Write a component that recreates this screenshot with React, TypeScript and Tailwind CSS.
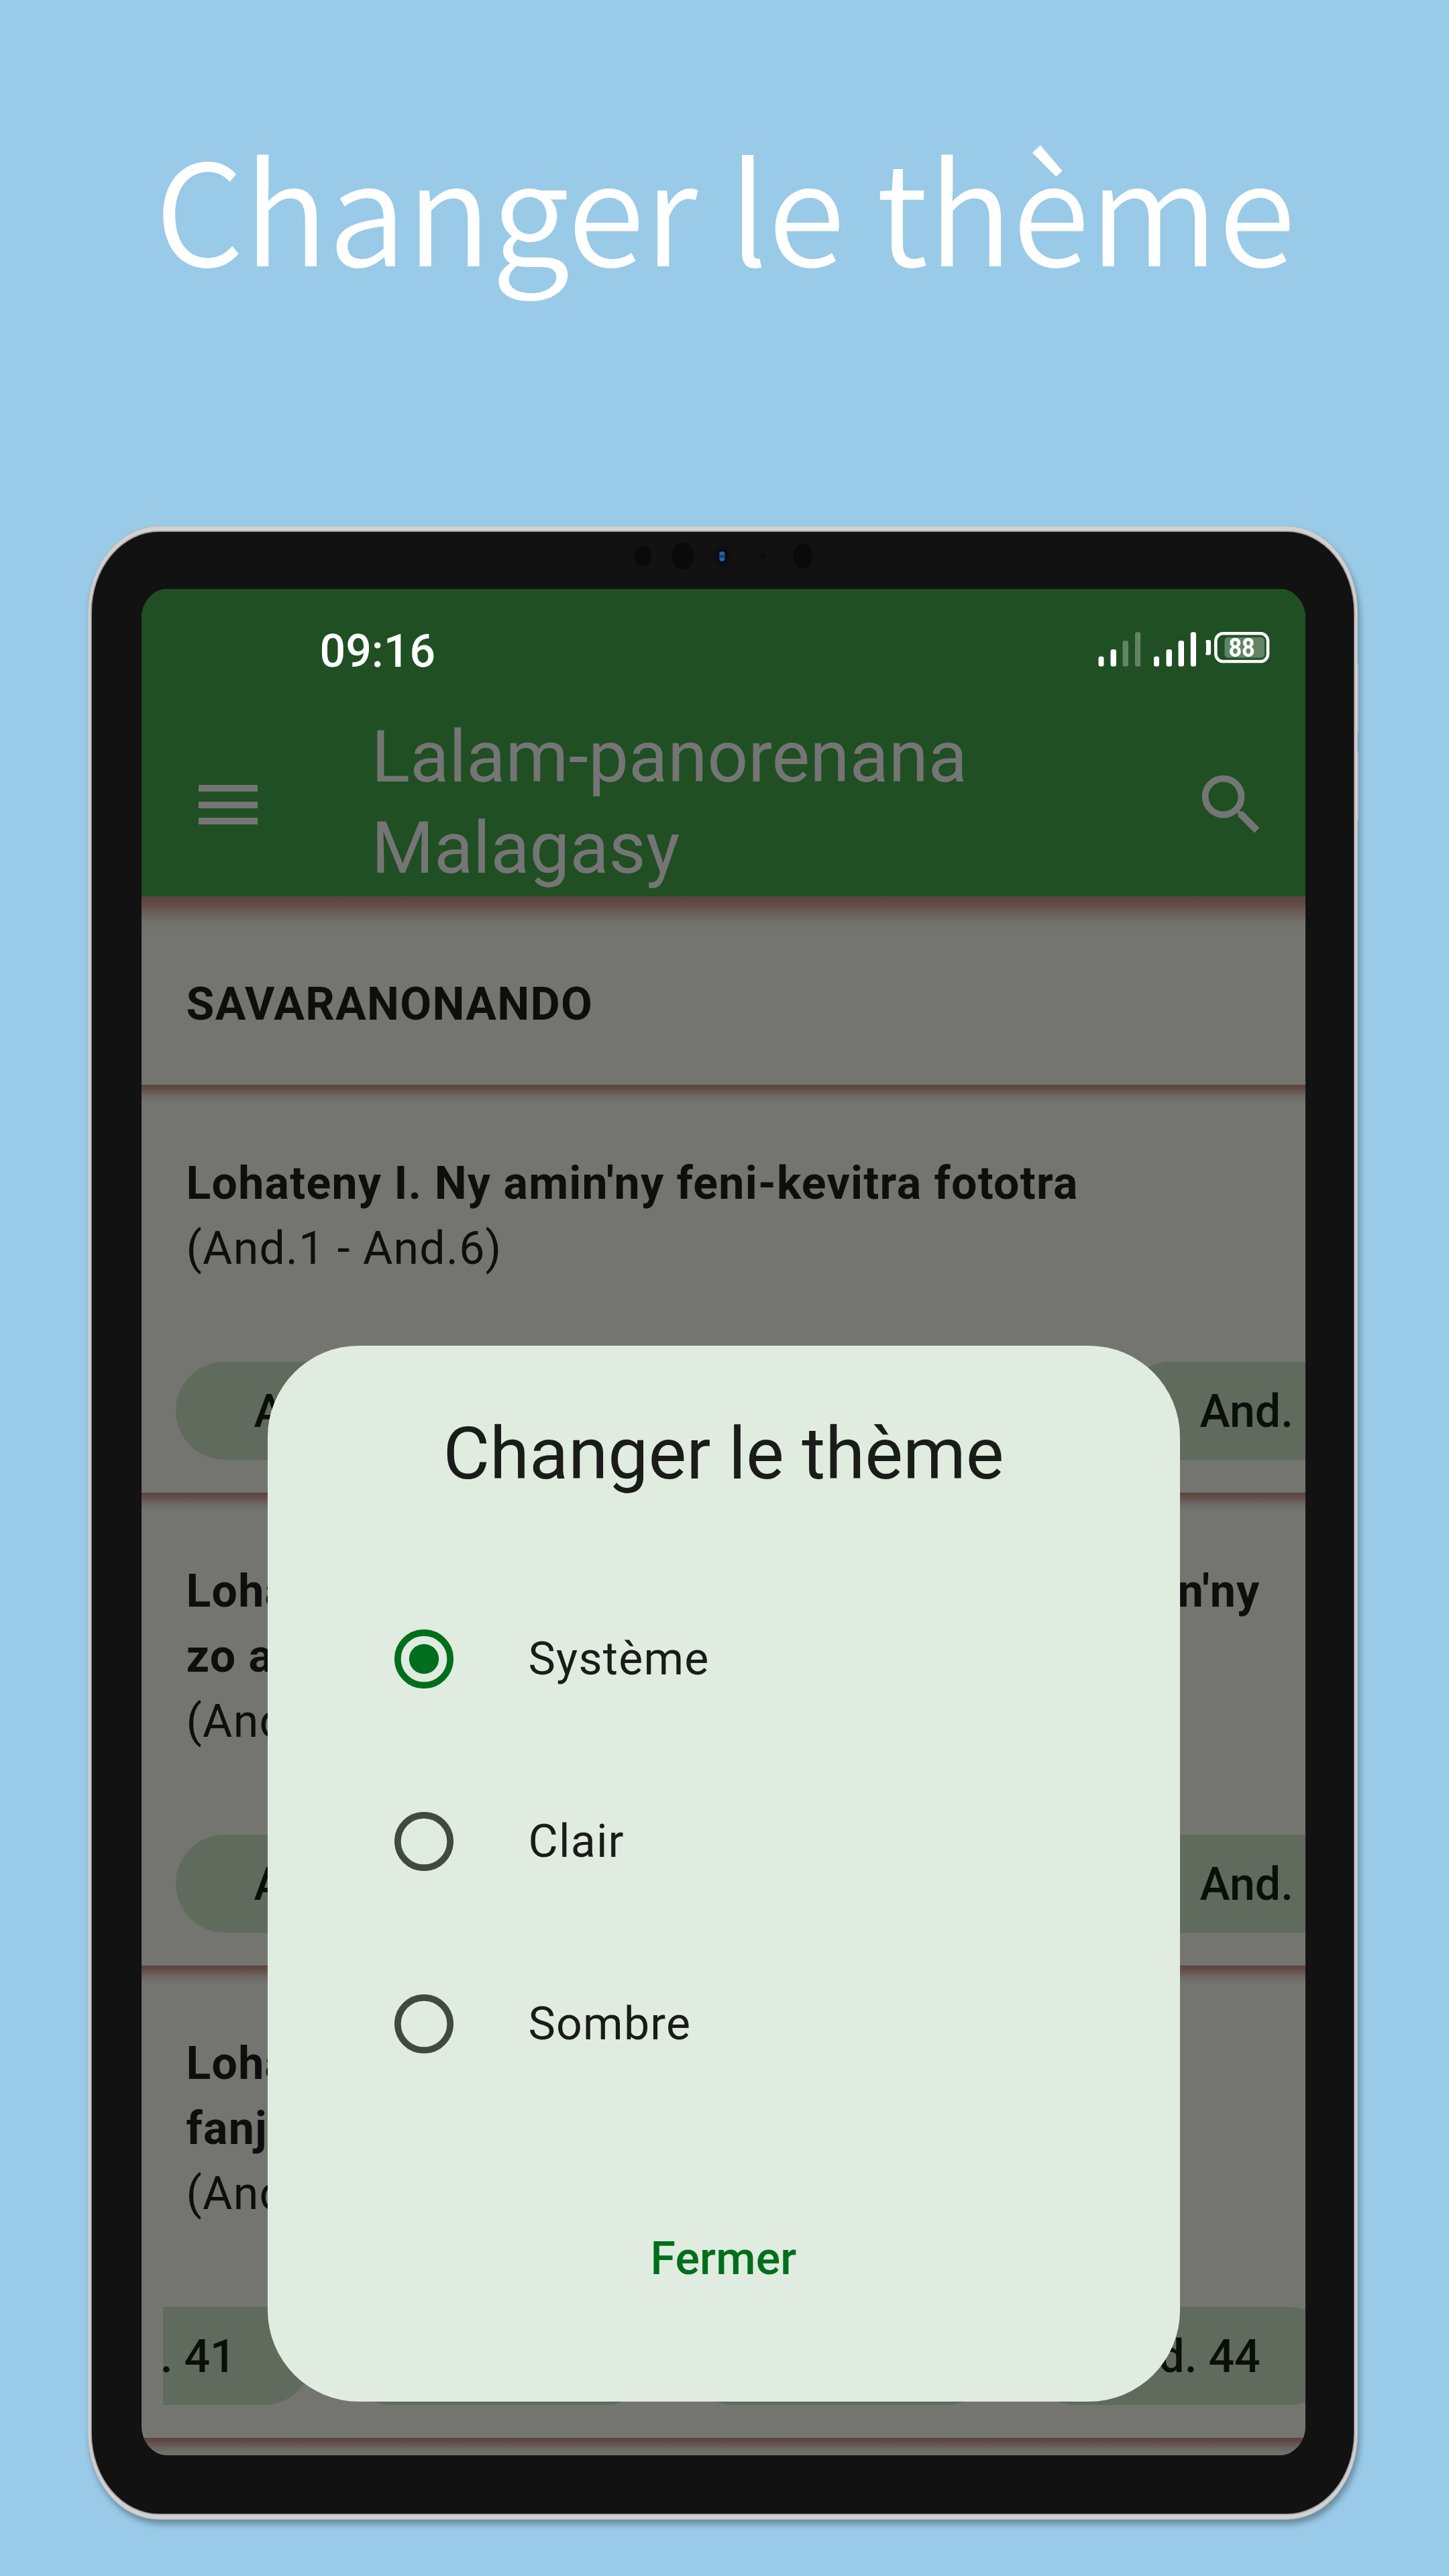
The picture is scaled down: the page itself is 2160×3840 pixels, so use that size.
import React from "react";

function StatusIcons() {
  return (
    <svg className="mt-[64px] h-[52px] w-[256px] shrink-0" viewBox="0 0 256 52" fill="#fff">
      <rect x="0.5" y="36.5" width="8" height="15" rx="3" />
      <rect x="18.5" y="26" width="8.5" height="25.5" rx="3" />
      <rect x="36.5" y="13" width="8.5" height="38.5" rx="3" opacity="0.3" />
      <rect x="55" y="0.3" width="8.2" height="51.2" rx="3" opacity="0.3" />
      <rect x="83" y="36.5" width="8" height="15" rx="3" />
      <rect x="101.5" y="26" width="8.5" height="25.5" rx="3" />
      <rect x="119.5" y="13" width="8.5" height="38.5" rx="3" />
      <rect x="137.8" y="0.3" width="8.2" height="51.2" rx="3" />
      <path d="M162 12h3.600a2.400 2.400 0 0 1 2.400 2.400v17.600a2.400 2.400 0 0 1-2.400 2.400h-4q-2-.4-1.400-2.400q.8-1.600.8-3.400v-11q0-1.800-.6-3.400q-.6-2 1.600-2.200z" />
      <rect x="175.300" y="2.300" width="77.700" height="41.700" rx="11" fill="none" stroke="#fff" strokeWidth="4.600" />
      <rect x="188.500" y="8" width="59.500" height="30.500" rx="5" opacity="0.3" />
      <text x="214" y="37" textAnchor="middle" textLength="39" lengthAdjust="spacingAndGlyphs" fontFamily="Roboto, sans-serif" fontWeight="700" fontSize="39.500">
        88
      </text>
    </svg>
  );
}

function MenuIcon() {
  return (
    <div className="mt-[2px] ml-[85px] flex h-[59px] w-[88px] shrink-0 flex-col justify-between">
      <div className="h-[10px] bg-[#757575]" />
      <div className="h-[10px] bg-[#757575]" />
      <div className="h-[10px] bg-[#757575]" />
    </div>
  );
}

function AppBar() {
  return (
    <header className="h-[458px] bg-[#1f4f23]">
      <div className="flex h-[183px] items-start justify-between pr-[53px] pl-[265.5px]">
        <span className="mt-[44px] text-[68px] leading-[98px] font-medium text-white">09:16</span>
        <StatusIcons />
      </div>
      <div className="flex h-[275px] items-center">
        <MenuIcon />
        <h2 className="mb-[3px] ml-[169.500px] w-[1223.500px] text-[107px] leading-[136px] font-normal text-[#757575]">
          Lalam-panorenana
          <br />
          Malagasy
        </h2>
        <svg className="mt-[2px] size-[117.600px] shrink-0" viewBox="0 0 24 24" fill="#757575">
          <path d="M15.500 14h-.79l-.28-.27A6.471 6.471 0 0 0 16 9.500 6.500 6.500 0 1 0 9.500 16c1.610 0 3.090-.59 4.230-1.570l.27.280v.79l5 4.990L20.490 19l-4.990-5zm-6 0C7.010 14 5 11.990 5 9.500S7.010 5 9.500 5 14 7.010 14 9.500 11.990 14 9.500 14z" />
        </svg>
      </div>
    </header>
  );
}

function Chip({ label, narrow = false }: { label: string; narrow?: boolean }) {
  return (
    <div
      className={
        "flex h-[146px] shrink-0 items-center rounded-full bg-[#606a5d] pt-[2px] text-[68px] font-medium whitespace-nowrap text-[#0a0f09] " +
        (narrow ? "w-[425px] pl-[116.500px]" : "w-[463px] pl-[115px]")
      }
    >
      {label}
    </div>
  );
}

const DIVIDER =
  "bg-[linear-gradient(to_bottom,#5d4440_0px,#5f4743_4px,#685653_10px,#6d6663_16px,#6f706c_22px,#747570_28px)] bg-no-repeat";

function Section({ lines, range, heightClass, children }: { lines: React.ReactNode[]; range: string; heightClass: string; children: React.ReactNode }) {
  return (
    <section className={"flex flex-col justify-between pt-[98.500px] pb-[49px] " + heightClass + " " + DIVIDER}>
      <div className="w-[1667.500px] pl-[66.500px] text-[68px] leading-[97px] tracking-[1.250px] text-[#0e0f0d]">
        {lines.map((line, i) => (
          <p key={i} className="font-bold whitespace-nowrap">
            {line}
          </p>
        ))}
        <p>{range}</p>
      </div>
      {children}
    </section>
  );
}

function Contents() {
  return (
    <main>
      <section className="h-[281px] bg-[linear-gradient(to_bottom,#5d4440_0px,#5f4743_7px,#67524f_17px,#6d6460_29px,#71706c_39px,#747570_54px)] pt-[112px] pl-[66.500px] text-[68px] leading-[98px] font-bold tracking-[1.290px] text-[#0e0f0d]">
        SAVARANONANDO
      </section>
      <Section heightClass="h-[608px]" lines={["Lohateny I. Ny amin'ny feni-kevitra fototra"]} range="(And.1 - And.6)">
        <div className="ml-[32px] flex gap-[45px] overflow-hidden pl-[19px]">
          {["And. 1", "And. 2", "And. 3", "And."].map((label) => (
            <Chip key={label} narrow label={label} />
          ))}
        </div>
      </Section>
      <Section
        heightClass="h-[704.500px]"
        lines={[
          <span className="flex justify-between">
            <span>Lohateny II.</span>
            <span>Ny amin'ny</span>
          </span>,
          "zo aman'andraikitra",
        ]}
        range="(And.7 - And.39)"
      >
        <div className="ml-[32px] flex gap-[45px] overflow-hidden pl-[19px]">
          {["And. 7", "And. 8", "And. 9", "And."].map((label) => (
            <Chip key={label} narrow label={label} />
          ))}
        </div>
      </Section>
      <Section heightClass="h-[704.500px]" lines={["Lohateny III.", "fanjakana"]} range="(And.40 - And.138)">
        <div className="ml-[32px] overflow-hidden">
          <div className="-ml-[240px] flex gap-[46px]">
            {[41, 42, 43, 44].map((n) => (
              <Chip key={n} label={"And. " + n} />
            ))}
          </div>
        </div>
      </Section>
      <div className={"h-[40px] " + DIVIDER} />
    </main>
  );
}

function Radio({ label, checked = false }: { label: string; checked?: boolean }) {
  return (
    <label className="flex h-[272px] items-center pl-[189px]">
      <svg className="size-[88px] shrink-0" viewBox="0 0 88 88">
        <circle cx="44" cy="44" r="39.200" fill="none" strokeWidth="9.700" stroke={checked ? "#006e1c" : "#424940"} />
        {checked && <circle cx="44" cy="44" r="22.200" fill="#006e1c" />}
      </svg>
      <span className="ml-[112px] text-[68px] leading-[98px] tracking-[1.200px] text-[#1a1c19]">{label}</span>
    </label>
  );
}

function ThemeDialog() {
  return (
    <div className="absolute inset-0 flex items-start justify-center pt-[1127.600px]">
      <div role="dialog" className="flex h-[1574.500px] w-[1360px] flex-col rounded-[136px] bg-[#e0ecdf] pt-[84px]">
        <h3 className="text-center text-[107px] leading-[155px] font-normal text-[#1a1c19]">Changer le thème</h3>
        <div className="mt-[92px]">
          <Radio label="Système" checked />
          <Radio label="Clair" />
          <Radio label="Sombre" />
        </div>
        <button className="mt-[117px] h-[194px] text-center text-[68px] font-medium tracking-[0.200px] text-[#006e1c]">Fermer</button>
      </div>
    </div>
  );
}

/* Front sensors in the top bezel. */
function Sensors() {
  return (
    <svg className="absolute top-[10px] left-[799.500px] h-[52px] w-[280px]" viewBox="936 803 280 52">
      <ellipse cx="958.300" cy="829.300" rx="12.500" ry="15" fill="#0a0a0a" />
      <ellipse cx="1017.700" cy="828.700" rx="16.300" ry="20.300" fill="#0a0a0a" />
      <ellipse cx="1076.300" cy="829" rx="13" ry="16" fill="#0f0f0f" />
      <ellipse cx="1077" cy="829" rx="8" ry="10" fill="#080a10" />
      <ellipse cx="1076.300" cy="829.300" rx="4.800" ry="7.500" fill="#123a6b" />
      <ellipse cx="1076.300" cy="825" rx="4" ry="2.800" fill="#1f67ad" />
      <ellipse cx="1076.300" cy="833.700" rx="4" ry="2.800" fill="#1f67ad" />
      <ellipse cx="1137.300" cy="829" rx="3.800" ry="4.800" fill="#0c0c0c" />
      <ellipse cx="1196.700" cy="829" rx="15" ry="18" fill="#0a0a0a" />
    </svg>
  );
}

export default function App() {
  return (
    <div className="h-[3840px] w-[2160px] overflow-hidden bg-[#99cae7] font-['Roboto',sans-serif]">
      <h1 className="h-[784px] pt-[186px] pl-[231px] font-['Noto_Sans_CJK_SC',sans-serif] text-[209px] leading-[240px] font-[350] whitespace-nowrap text-white">
        Changer le thème
      </h1>
      <div className="relative ml-[130.500px] h-[2971.500px] w-[1893px] rounded-[106px/128px] bg-[#d3d2d2] pt-[9px] pr-[6px] pb-[9px] pl-[6px] shadow-[3px_7px_8px_rgba(30,50,65,0.4),inset_0_0_2px_#8f8f8f]">
        <div className="absolute top-[206px] -right-px h-[103px] w-px bg-[#b5bcc2]" />
        <div className="absolute top-[338px] -right-px h-[100px] w-px bg-[#b5bcc2]" />
        <div className="relative h-full rounded-[100px/120px] bg-[#121212] pt-[85px] pl-[74.500px] shadow-[0_0_2px_1px_#6b6b6b]">
          <Sensors />
          <div className="relative h-[2782px] w-[1735px] overflow-hidden rounded-[38px/44px] bg-[#747570]">
            <AppBar />
            <Contents />
            <ThemeDialog />
          </div>
        </div>
      </div>
    </div>
  );
}
